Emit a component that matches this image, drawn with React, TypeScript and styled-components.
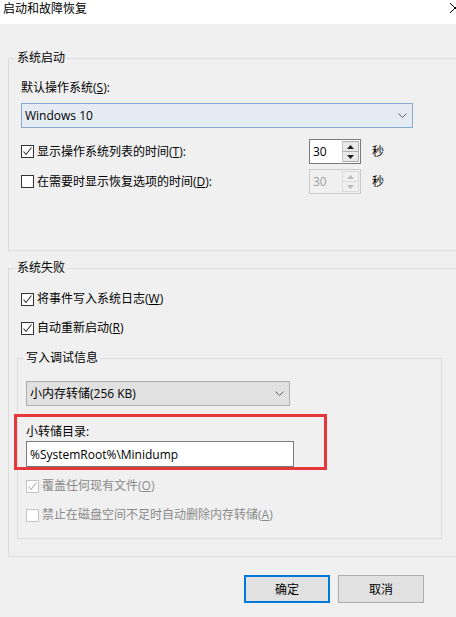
import React from 'react';
import styled, { createGlobalStyle } from 'styled-components';

const GlobalStyle = createGlobalStyle`
  html, body {
    margin: 0;
    padding: 0;
    background: #f0f0f0;
  }
  body {
    font-family: 'Open Sans', 'Noto Sans CJK SC', sans-serif;
    font-size: 12px;
    color: #000;
  }
`;

const Window = styled.div`
  width: 456px;
  height: 617px;
  overflow: hidden;
  background: #f0f0f0;
`;

const TitleBar = styled.div`
  height: 24px;
  background: #ffffff;
  display: flex;
  align-items: center;
  padding-left: 3px;
  line-height: 16px;
`;

const Title = styled.div`
  flex: 1;
  margin-top: -6px;
`;

const Close = styled.svg`
  width: 10px;
  height: 10px;
  margin-right: -4px;
  margin-top: -8px;
  flex: none;
`;

const Body = styled.div`
  padding: 26px 0 0 8px;
`;

const Group = styled.fieldset<{ $pad: number; $width: number }>`
  margin: 0;
  padding: 14px 0 56px ${({ $pad }) => $pad}px;
  border: 1px solid #dcdcdc;
  width: ${({ $width }) => $width}px;
  box-sizing: border-box;
  min-inline-size: 0;

  & + & {
    margin-top: 9px;
    padding-top: 15px;
    padding-bottom: 17px;
  }
`;

const InnerGroup = styled.fieldset`
  margin: 14px 0 0;
  padding: 15px 0 15px 8px;
  border: 1px solid #dcdcdc;
  width: 425px;
  box-sizing: border-box;
  min-inline-size: 0;
`;

const Legend = styled.legend<{ $shift: number }>`
  padding: 0 2px;
  margin-left: ${({ $shift }) => $shift}px;
  line-height: 16px;
  height: 16px;
`;

const Label = styled.div`
  line-height: 16px;
  height: 16px;
`;

const Combo = styled.div<{ $width: number; $focus?: boolean }>`
  margin-top: 7px;
  width: ${({ $width }) => $width}px;
  height: 25px;
  box-sizing: border-box;
  border: 1px solid ${({ $focus }) => ($focus ? '#86a9d2' : '#adadad')};
  background: ${({ $focus }) => ($focus ? '#e4ebf3' : '#e1e1e1')};
  display: flex;
  align-items: center;
  padding: 0 5px 0 3px;
  line-height: 16px;

  span {
    flex: 1;
  }
`;

const Chevron = () => (
  <svg width="9" height="5" viewBox="0 0 9 5">
    <path d="M0.5 0.5 L4.5 4.5 L8.5 0.5" fill="none" stroke="#606060" strokeWidth="1" />
  </svg>
);

const SpinRow = styled.div<{ $gap: number }>`
  display: grid;
  grid-template-columns: 288px 52px auto;
  align-items: center;
  height: 25px;
  margin-top: ${({ $gap }) => $gap}px;
`;

const CheckRow = styled.label<{ $gap?: number; $disabled?: boolean; $indent?: number }>`
  display: flex;
  align-items: center;
  height: 16px;
  line-height: 16px;
  padding-left: ${({ $indent }) => $indent ?? 4}px;
  margin-top: ${({ $gap }) => $gap ?? 0}px;
  color: ${({ $disabled }) => ($disabled ? '#8a8a8a' : '#000')};
`;

const Box = styled.span<{ $disabled?: boolean }>`
  width: 13px;
  height: 13px;
  box-sizing: border-box;
  border: 1px solid ${({ $disabled }) => ($disabled ? '#c4c4c4' : '#333333')};
  background: #ffffff;
  margin-right: 3px;
  display: flex;
  align-items: center;
  justify-content: center;
  flex: none;
`;

const Check = ({ checked, disabled }: { checked?: boolean; disabled?: boolean }) => (
  <Box $disabled={disabled}>
    {checked && (
      <svg width="11" height="11" viewBox="0 0 11 11">
        <path
          d="M1.5 5.5 L4 8.5 L9.5 1.5"
          fill="none"
          stroke={disabled ? '#b0b0b0' : '#333333'}
          strokeWidth="1.1"
        />
      </svg>
    )}
  </Box>
);

const Spinner = styled.div<{ $disabled?: boolean }>`
  width: 52px;
  height: 25px;
  box-sizing: border-box;
  border: 1px solid ${({ $disabled }) => ($disabled ? '#cccccc' : '#7a7a7a')};
  background: ${({ $disabled }) => ($disabled ? '#f0f0f0' : '#ffffff')};
  color: ${({ $disabled }) => ($disabled ? '#a0a0a0' : '#000')};
  display: flex;
  align-items: center;
  justify-content: space-between;
  padding: 1px 1px 1px 3px;
  line-height: 16px;
`;

const SpinButtons = styled.div<{ $disabled?: boolean }>`
  width: 16px;
  height: 100%;
  display: flex;
  flex-direction: column;
  border-left: 1px solid ${({ $disabled }) => ($disabled ? '#dadada' : '#c5c5c5')};

  div {
    flex: 1;
    display: flex;
    align-items: center;
    justify-content: center;
    background: ${({ $disabled }) => ($disabled ? '#f0f0f0' : '#e9e9e9')};
    border: 1px solid ${({ $disabled }) => ($disabled ? '#dadada' : '#adadad')};
    border-left: none;
  }
  div + div {
    border-top: none;
  }
`;

const Arrow = ({ up, disabled }: { up?: boolean; disabled?: boolean }) => (
  <svg width="7" height="4" viewBox="0 0 7 4">
    <path
      d={up ? 'M0 4 L3.5 0 L7 4 Z' : 'M0 0 L3.5 4 L7 0 Z'}
      fill={disabled ? '#bcbcbc' : '#202020'}
    />
  </svg>
);

const Seconds = styled.span`
  margin-left: 11px;
  line-height: 16px;
`;

const DumpBlock = styled.div`
  position: relative;
  margin-top: 18px;
  width: 268px;
`;

const Highlight = styled.div`
  position: absolute;
  top: -10px;
  left: -12px;
  width: 313px;
  height: 56px;
  box-sizing: border-box;
  border: 3px solid #e6373d;
  pointer-events: none;
`;

const PathInput = styled.div`
  margin-top: 1px;
  height: 26px;
  box-sizing: border-box;
  border: 1px solid #7a7a7a;
  background: #ffffff;
  display: flex;
  align-items: center;
  padding-left: 3px;
`;

const Footer = styled.div`
  display: flex;
  justify-content: flex-end;
  gap: 8px;
  margin-top: 18px;
  padding-right: 32px;
`;

const Button = styled.button<{ $primary?: boolean }>`
  width: 86px;
  height: 28px;
  box-sizing: border-box;
  font: inherit;
  color: #000;
  background: #e1e1e1;
  border: ${({ $primary }) => ($primary ? '2px solid #0078d7' : '1px solid #adadad')};
  padding: 0;
`;

const SpinBox = ({ value, disabled }: { value: string; disabled?: boolean }) => (
  <Spinner $disabled={disabled}>
    <span>{value}</span>
    <SpinButtons $disabled={disabled}>
      <div>
        <Arrow up disabled={disabled} />
      </div>
      <div>
        <Arrow disabled={disabled} />
      </div>
    </SpinButtons>
  </Spinner>
);

export default function App() {
  return (
    <Window>
      <GlobalStyle />
      <TitleBar>
        <Title>启动和故障恢复</Title>
        <Close viewBox="0 0 10 10">
          <path d="M0 0 L10 10 M10 0 L0 10" stroke="#000" strokeWidth="1" />
        </Close>
      </TitleBar>
      <Body>
        <Group $pad={12} $width={460}>
          <Legend $shift={-6}>系统启动</Legend>
          <Label>
            默认操作系统(<u>S</u>):
          </Label>
          <Combo $width={392} $focus>
            <span>Windows 10</span>
            <Chevron />
          </Combo>
          <SpinRow $gap={11}>
            <CheckRow $indent={0}>
              <Check checked />
              显示操作系统列表的时间(<u>T</u>):
            </CheckRow>
            <SpinBox value="30" />
            <Seconds>秒</Seconds>
          </SpinRow>
          <SpinRow $gap={5}>
            <CheckRow $indent={0}>
              <Check />
              在需要时显示恢复选项的时间(<u>D</u>):
            </CheckRow>
            <SpinBox value="30" disabled />
            <Seconds>秒</Seconds>
          </SpinRow>
        </Group>

        <Group $pad={8} $width={460}>
          <Legend $shift={-2}>系统失败</Legend>
          <CheckRow>
            <Check checked />
            将事件写入系统日志(<u>W</u>)
          </CheckRow>
          <CheckRow $gap={13}>
            <Check checked />
            自动重新启动(<u>R</u>)
          </CheckRow>

          <InnerGroup>
            <Legend $shift={-2}>写入调试信息</Legend>
            <Combo $width={264} style={{ marginTop: 0 }}>
              <span>小内存转储(256 KB)</span>
              <Chevron />
            </Combo>
            <DumpBlock>
              <Label>小转储目录:</Label>
              <PathInput>%SystemRoot%\Minidump</PathInput>
              <Highlight />
            </DumpBlock>
            <CheckRow $gap={11} $disabled $indent={0}>
              <Check checked disabled />
              覆盖任何现有文件(<u>O</u>)
            </CheckRow>
            <CheckRow $gap={13} $disabled $indent={0}>
              <Check disabled />
              禁止在磁盘空间不足时自动删除内存转储(<u>A</u>)
            </CheckRow>
          </InnerGroup>
        </Group>

        <Footer>
          <Button $primary>确定</Button>
          <Button>取消</Button>
        </Footer>
      </Body>
    </Window>
  );
}
